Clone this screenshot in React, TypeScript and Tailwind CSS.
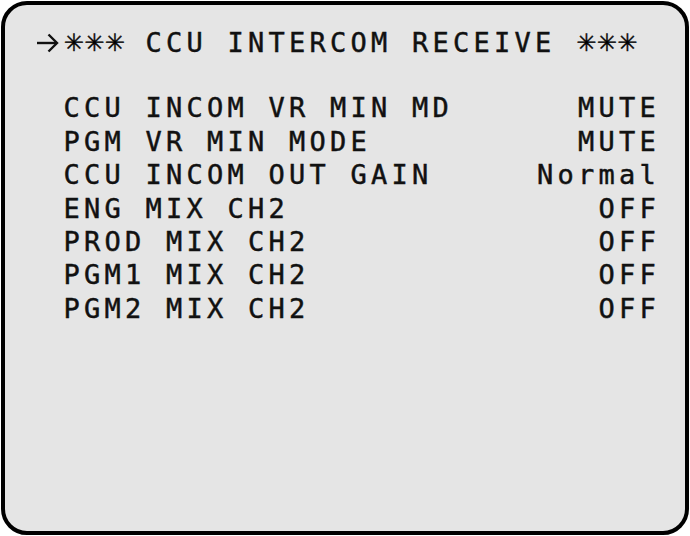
import React from 'react';

const rows: { label: string; value: string }[] = [
  { label: 'CCU INCOM VR MIN MD', value: 'MUTE' },
  { label: 'PGM VR MIN MODE', value: 'MUTE' },
  { label: 'CCU INCOM OUT GAIN', value: 'Normal' },
  { label: 'ENG MIX CH2', value: 'OFF' },
  { label: 'PROD MIX CH2', value: 'OFF' },
  { label: 'PGM1 MIX CH2', value: 'OFF' },
  { label: 'PGM2 MIX CH2', value: 'OFF' },
];

const Stars: React.FC = () => (
  <span className="inline-flex items-center">
    {[0, 1, 2].map((i) => (
      <span
        key={i}
        className="inline-flex justify-center w-[20.5px] tracking-normal text-[24px] leading-none text-black"
        style={{ fontFamily: '"DejaVu Sans", sans-serif' }}
      >
        {'\u2733\uFE0E'}
      </span>
    ))}
  </span>
);

const App: React.FC = () => {
  return (
    <div className="w-[690px] h-[536px] bg-white p-[1px]">
      {/* Menu panel */}
      <div
        className="w-[688px] h-[534px] border-4 border-black rounded-[26px] bg-[#e5e5e5] pt-[21px] pl-[38px] pr-[25px] text-[#111] text-[27px] leading-[33.4px] tracking-[4.25px] whitespace-pre [-webkit-text-stroke:0.45px_#111]"
        style={{ fontFamily: '"DejaVu Sans Mono", "DejaVu Sans", monospace' }}
      >
        {/* Title */}
        <div className="flex items-center h-[33.4px]">
          <svg width="22" height="20" viewBox="0 0 22 20" className="-ml-[6px] mr-[4.5px]" fill="none" stroke="#111" strokeWidth="2.4">
            <path d="M0 10h20" />
            <path d="M11.5 1.5 20 10l-8.5 8.5" />
          </svg>
          <Stars />
          <span> CCU INTERCOM RECEIVE </span>
          <Stars />
        </div>

        {/* Settings */}
        <div className="mt-[32px] pl-[20.5px]">
          {rows.map((r) => (
            <div key={r.label} className="flex justify-between">
              <span>{r.label}</span>
              <span>{r.value}</span>
            </div>
          ))}
        </div>
      </div>
    </div>
  );
};

export default App;
